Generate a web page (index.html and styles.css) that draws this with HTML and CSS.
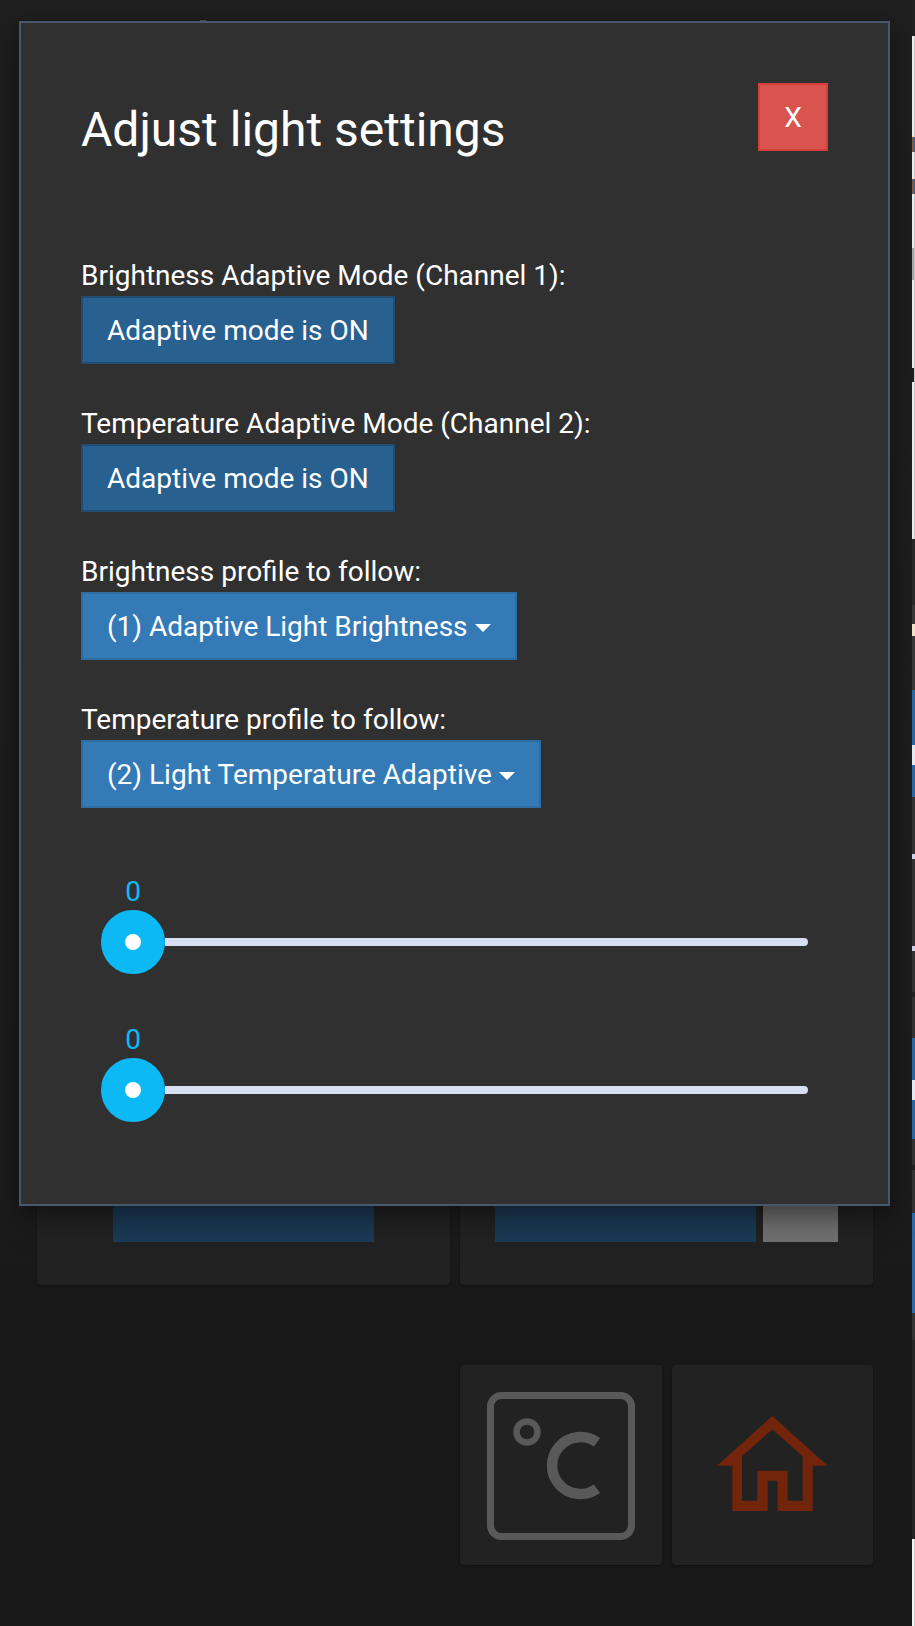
FILE: index.html
```
<!DOCTYPE html>
<html>

<head>
    <title>Adjust light settings</title>
    <link rel="stylesheet" href="styles.css">
</head>

<body>
    <div class="page">
        <div class="card-row">
            <div class="card">
                <div class="card-bar"></div>
            </div>
            <div class="card">
                <div class="card-bar"></div>
                <div class="card-grey"></div>
            </div>
        </div>
        <div class="tile-row">
            <div class="tile tile-temp">
                <svg class="temp-icon" width="148" height="148" viewBox="0 0 148 148">
                    <rect x="3.5" y="3.5" width="141" height="141" rx="11" fill="none" stroke="#595959" stroke-width="7"/>
                    <circle cx="40" cy="40" r="10.5" fill="none" stroke="#595959" stroke-width="6.5"/>
                    <path d="M110 50.2 A28.5 28.5 0 1 0 110 96.8" fill="none" stroke="#595959" stroke-width="10.5"/>
                </svg>
            </div>
            <div class="tile">
                <svg class="home-icon" width="111" height="96" viewBox="0 0 333 288">
                    <path fill="#72250b" d="M166 3 L0 152 L46 152 L46 288 L152 288 L152 197 L182 197 L182 288 L287 288 L287 152 L332 152 Z M166 43 L257 124 L257 257 L212 257 L212 167 L121 167 L121 257 L75 257 L75 124 Z"/>
                </svg>
            </div>
        </div>
    </div>

    <div class="edge-strip"></div>
    <div class="top-notch"></div>

    <div class="modal-box">
        <div class="modal-head">
            <h1 class="modal-title">Adjust light settings</h1>
            <button class="btn btn-close">X</button>
        </div>

        <div class="field">
            <label>Brightness Adaptive Mode (Channel 1):</label>
            <button class="btn btn-active">Adaptive mode is ON</button>
        </div>
        <div class="field">
            <label>Temperature Adaptive Mode (Channel 2):</label>
            <button class="btn btn-active">Adaptive mode is ON</button>
        </div>
        <div class="field">
            <label>Brightness profile to follow:</label>
            <button class="btn btn-primary">(1) Adaptive Light Brightness <span class="caret"></span></button>
        </div>
        <div class="field field-last">
            <label>Temperature profile to follow:</label>
            <button class="btn btn-primary">(2) Light Temperature Adaptive <span class="caret"></span></button>
        </div>

        <div class="slider">
            <div class="slider-value">0</div>
            <div class="slider-line">
                <div class="slider-thumb"></div>
                <div class="slider-track"></div>
            </div>
        </div>
        <div class="slider">
            <div class="slider-value">0</div>
            <div class="slider-line">
                <div class="slider-thumb"></div>
                <div class="slider-track"></div>
            </div>
        </div>
    </div>
</body>
</html>
```

FILE: styles.css
```
html, body {
    margin: 0;
    padding: 0;
}

body {
    background: linear-gradient(#1f1f1f 0, #1c1c1c 1200px, #181818 1300px);
    font-family: Roboto, "Liberation Sans", sans-serif;
    color: #fff;
    height: 1626px;
    overflow: hidden;
    position: relative;
}

.page {
    padding: 1100px 42px 0 37px;
}

.card-row {
    display: flex;
    gap: 10px;
}

.card {
    flex: 1;
    height: 185px;
    background-color: #222;
    border-radius: 4px;
    box-shadow: 0 1px 2px rgba(0, 0, 0, .4);
    display: flex;
    justify-content: center;
    gap: 7px;
    padding-top: 40px;
    box-sizing: border-box;
}

.card-bar {
    width: 261px;
    height: 102px;
    background-color: #1b3a56;
}

.card-grey {
    width: 75px;
    height: 102px;
    background-color: #707070;
}

.tile-row {
    display: flex;
    justify-content: flex-end;
    gap: 10px;
    margin-top: 80px;
}

.tile {
    width: 201px;
    height: 200px;
    background-color: #222;
    border-radius: 4px;
    box-shadow: 0 1px 2px rgba(0, 0, 0, .4);
    display: flex;
    align-items: center;
    justify-content: center;
}

.tile-temp {
    width: 202px;
}

.temp-icon {
    margin-top: 2px;
}

.home-icon {
    margin-bottom: 5px;
}

/* sliver of another window along the right side */
.edge-strip {
    position: absolute;
    top: 0;
    right: 0;
    width: 3px;
    height: 1626px;
    background:
        linear-gradient(to bottom,
            transparent 36px,
            #c8c8c8 36px, #c8c8c8 137px,
            #2a6aa8 137px, #2a6aa8 152px,
            #c8c8c8 152px, #c8c8c8 179px,
            #2a6aa8 179px, #2a6aa8 194px,
            #c8c8c8 194px, #c8c8c8 539px,
            transparent 539px, transparent 1539px,
            #c8c8c8 1539px) 2px 0 / 1px 100% no-repeat,
        linear-gradient(to bottom,
            #222 36px,
            #f2f2f2 36px, #f2f2f2 137px,
            #8a5a3a 137px, #8a5a3a 152px,
            #f2f2f2 152px, #f2f2f2 179px,
            #8a5a3a 179px, #8a5a3a 194px,
            #f2f2f2 194px, #f2f2f2 248px,
            #aaa 248px, #aaa 280px,
            #f2f2f2 280px, #f2f2f2 368px,
            #222 368px, #222 382px,
            #f2f2f2 382px, #f2f2f2 539px,
            #2a2a2a 539px, #2a2a2a 605px,
            #3a3a3a 605px, #3a3a3a 624px,
            #f4e8d0 624px, #f4e8d0 636px,
            #3a3a3a 636px, #3a3a3a 690px,
            #2a6aa8 690px, #2a6aa8 745px,
            #e8eef4 745px, #e8eef4 765px,
            #2a6aa8 765px, #2a6aa8 797px,
            #333 797px, #333 854px,
            #d4d8ee 854px, #d4d8ee 859px,
            #333 859px, #333 946px,
            #d4d8ee 946px, #d4d8ee 951px,
            #333 951px, #333 992px,
            #222 992px, #222 997px,
            #333 997px, #333 1038px,
            #2a6aa8 1038px, #2a6aa8 1080px,
            #e8eef4 1080px, #e8eef4 1100px,
            #2a6aa8 1100px, #2a6aa8 1139px,
            #333 1139px, #333 1165px,
            #222 1165px, #222 1170px,
            #333 1170px, #333 1213px,
            #2a6aa8 1213px, #2a6aa8 1313px,
            #333 1313px, #333 1340px,
            #262626 1340px, #262626 1539px,
            #f2f2f2 1539px);
}

.top-notch {
    position: absolute;
    left: 200px;
    top: 20px;
    width: 6px;
    height: 1px;
    background-color: #555;
}

.modal-box {
    position: absolute;
    left: 19px;
    top: 21px;
    width: 871px;
    height: 1185px;
    box-sizing: border-box;
    background-color: #303030;
    border: 2px solid #46586b;
    box-shadow: 0 9px 27px rgba(0, 0, 0, .5);
    padding: 60px 60px 0 60px;
}

.modal-head {
    display: flex;
    justify-content: space-between;
    align-items: flex-start;
    height: 173px;
}

.modal-title {
    margin: 20px 0 0 0;
    font-size: 48px;
    font-weight: 400;
    line-height: 54px;
}

.field {
    margin-bottom: 40px;
}

.field-last {
    margin-bottom: 68px;
}

.field label {
    display: block;
    font-size: 28px;
    line-height: 40px;
}

.btn {
    display: block;
    height: 68px;
    padding: 0 24px;
    font-family: inherit;
    font-size: 28px;
    color: #fff;
    border-style: solid;
    border-width: 2px;
    box-sizing: border-box;
}

.btn-close {
    width: 70px;
    padding: 0;
    background-color: #d9534f;
    border-color: #d43f3a;
}

.btn-active {
    background-color: #286090;
    border-color: #204d74;
}

.btn-primary {
    background-color: #337ab7;
    border-color: #2e6da4;
}

.caret {
    display: inline-block;
    width: 0;
    height: 0;
    vertical-align: middle;
    border-top: 8px solid #fff;
    border-left: 8px solid transparent;
    border-right: 8px solid transparent;
}

.slider {
    margin-bottom: 50px;
}

.slider-value {
    width: 64px;
    margin: 0 0 2px 20px;
    text-align: center;
    font-size: 28px;
    line-height: 32px;
    color: #0db9f5;
}

.slider-line {
    display: flex;
    align-items: center;
    margin-left: 20px;
    width: 707px;
}

.slider-thumb {
    width: 64px;
    height: 64px;
    border-radius: 50%;
    box-sizing: border-box;
    border: 24px solid #0db9f5;
    background-color: #fff;
    flex: none;
}

.slider-track {
    flex: 1;
    height: 8px;
    background-color: #d7e0f3;
    border-radius: 0 4px 4px 0;
}
```
